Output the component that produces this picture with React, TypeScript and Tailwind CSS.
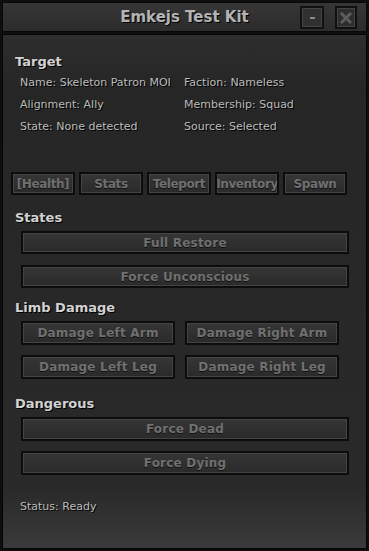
import React from 'react';

const font = { fontFamily: '"DejaVu Sans", "Noto Sans", sans-serif' };

const Btn: React.FC<{ label: string; className?: string }> = ({ label, className }) => (
  <button
    className={`flex items-center justify-center border-2 border-[#0c0c0c] bg-gradient-to-b from-[#363636] to-[#2a2a2a] text-[12px] font-bold tracking-[0.2px] text-[#707070] shadow-[inset_0_0_0_1px_#444] [text-shadow:0_1px_0_#111] ${className ?? ''}`}
  >
    {label}
  </button>
);

const Heading: React.FC<{ children: React.ReactNode }> = ({ children }) => (
  <h2 className="text-[13px] font-bold leading-none text-[#d2d2d2] [text-shadow:1px_1px_0_#000]">{children}</h2>
);

export default function App() {
  const info = [
    ['Name: Skeleton Patron MOI', 'Faction: Nameless'],
    ['Alignment: Ally', 'Membership: Squad'],
    ['State: None detected', 'Source: Selected'],
  ];
  const tabs = ['[Health]', 'Stats', 'Teleport', 'Inventory', 'Spawn'];

  return (
    <div style={font} className="flex h-[551px] w-[369px] flex-col bg-[#0e0e0e] p-[2px]">
      {/* title bar */}
      <div className="relative flex h-[30px] shrink-0 items-center justify-center border border-[#080808] bg-gradient-to-b from-[#363636] to-[#2c2c2c]">
        <span className="text-[15px] font-bold text-[#b4b4b4] [text-shadow:1px_1px_0_#000]">Emkejs Test Kit</span>
        <div className="absolute right-[9px] top-[3px] flex gap-[11px]">
          <div className="flex h-[23px] w-[24px] items-center justify-center border-2 border-[#101010] bg-[#303030] shadow-[inset_0_0_0_1px_#444]">
            <span className="h-[2px] w-[5px] bg-[#8a8a8a]" />
          </div>
          <div className="flex h-[23px] w-[22px] items-center justify-center border-2 border-[#101010] bg-[#2e2e2e] shadow-[inset_0_0_0_1px_#444]">
            <svg width="14" height="14" viewBox="0 0 14 14">
              <path d="M2 2 L12 12 M12 2 L2 12" stroke="#5c5c5c" strokeWidth="3" />
            </svg>
          </div>
        </div>
      </div>

      {/* body */}
      <div className="mt-[2px] flex flex-1 flex-col border border-[#050505] bg-gradient-to-b from-[#2e2e2e] via-[#262626] via-10% to-[#2a2a2a] px-[12px] pt-[20px]">
        <div className="-mx-[12px] flex flex-1 flex-col bg-[linear-gradient(to_bottom,transparent_88%,#3a3a3a)] px-[12px]">
          <Heading>Target</Heading>
          <div className="mt-[8px] grid grid-cols-[164px_1fr] gap-y-[9px] pl-[5px] text-[11px] leading-[13px] text-[#bcbcbc] [text-shadow:1px_1px_0_#000]">
            {info.map(([a, b]) => (
              <React.Fragment key={a}>
                <span className="overflow-hidden whitespace-nowrap">{a}</span>
                <span>{b}</span>
              </React.Fragment>
            ))}
          </div>

          <div className="-ml-[4px] mt-[39px] flex gap-[4px]">
            {tabs.map((t) => (
              <Btn key={t} label={t} className="h-[23px] w-[64px] overflow-hidden whitespace-nowrap !text-[12px] !tracking-[-0.4px]" />
            ))}
          </div>

          <div className="mt-[16px]">
            <Heading>States</Heading>
          </div>
          <div className="mt-[7px] flex flex-col gap-[11px] px-[6px]">
            <Btn label="Full Restore" className="h-[23px] w-[328px]" />
            <Btn label="Force Unconscious" className="h-[23px] w-[328px]" />
          </div>

          <div className="mt-[13px]">
            <Heading>Limb Damage</Heading>
          </div>
          <div className="mt-[7px] grid grid-cols-[154px_154px] gap-x-[10px] gap-y-[10px] pl-[6px]">
            <Btn label="Damage Left Arm" className="h-[24px]" />
            <Btn label="Damage Right Arm" className="h-[24px]" />
            <Btn label="Damage Left Leg" className="h-[24px]" />
            <Btn label="Damage Right Leg" className="h-[24px]" />
          </div>

          <div className="mt-[18px]">
            <Heading>Dangerous</Heading>
          </div>
          <div className="mt-[7px] flex flex-col gap-[10px] pl-[6px]">
            <Btn label="Force Dead" className="h-[24px] w-[328px]" />
            <Btn label="Force Dying" className="h-[24px] w-[328px]" />
          </div>

          <p className="mt-[24px] pl-[5px] text-[11px] text-[#bcbcbc] [text-shadow:1px_1px_0_#000]">Status: Ready</p>
        </div>
      </div>
    </div>
  );
}
